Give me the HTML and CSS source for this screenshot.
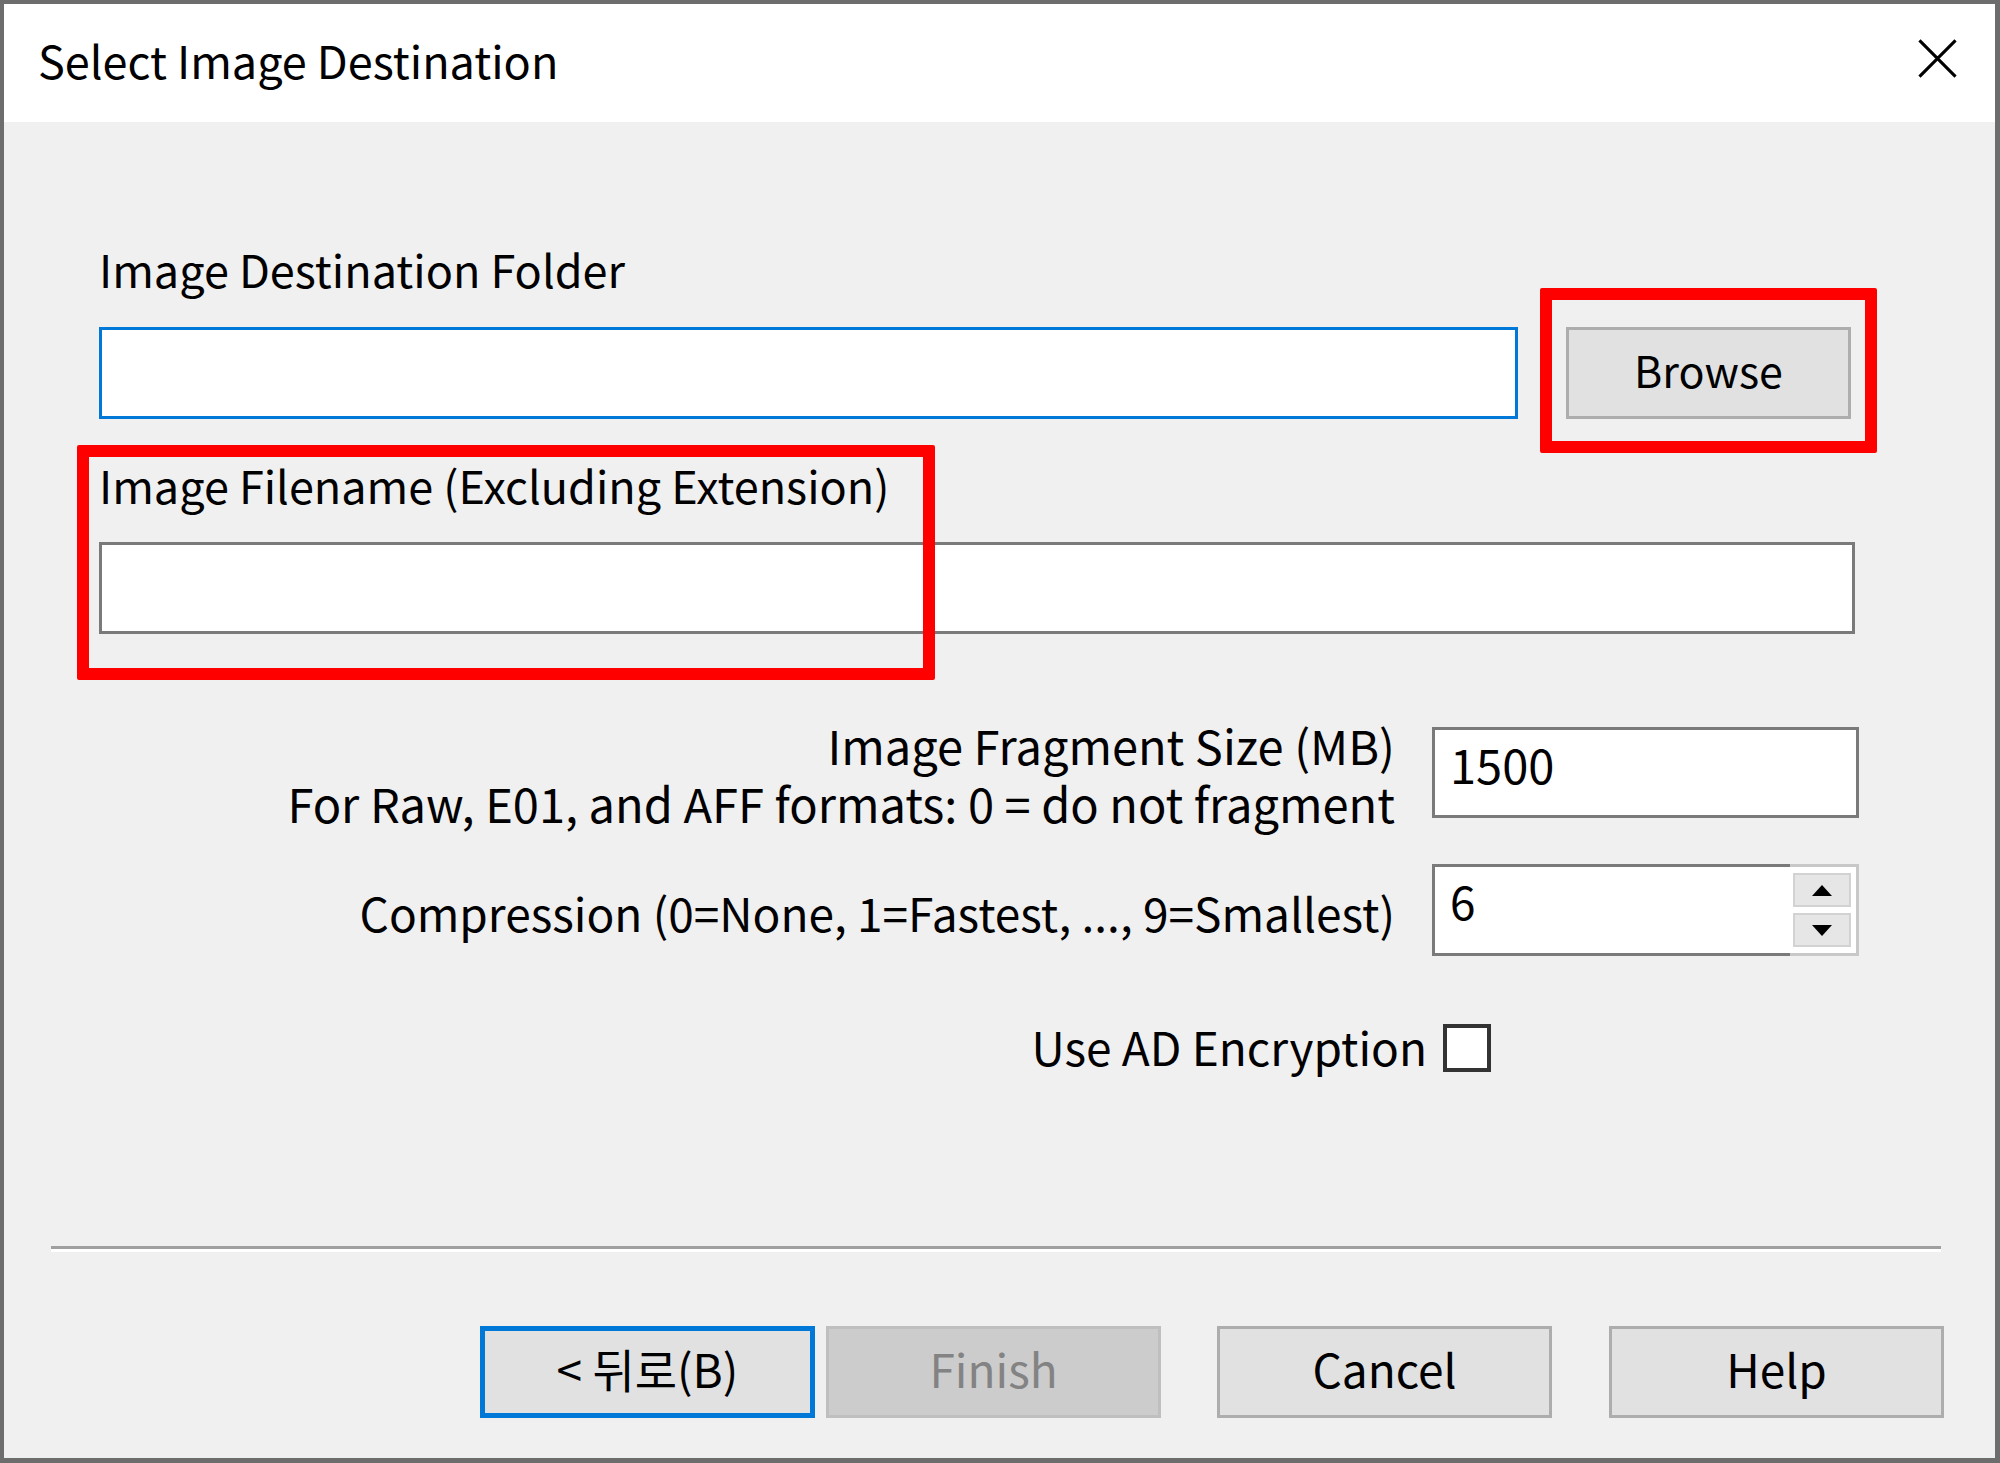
FILE: index.html
```html
<!DOCTYPE html>
<html lang="en">
<head>
<meta charset="utf-8">
<title>Select Image Destination</title>
<link rel="stylesheet" href="styles.css">
</head>
<body>
<div class="window">
  <div class="titlebar">
    <div class="title">Select Image Destination</div>
    <svg class="close" viewBox="0 0 40 40" aria-label="Close">
      <path d="M1.5 1.5 L38.5 38.5 M38.5 1.5 L1.5 38.5" stroke="#000" stroke-width="3.2" fill="none"/>
    </svg>
  </div>
  <div class="content">
    <div class="label l1">Image Destination Folder</div>
    <div class="row1">
      <div class="field field-focus"></div>
      <div class="browse-wrap">
        <div class="btn browse">Browse</div>
        <div class="mark mark-browse"></div>
      </div>
    </div>
    <div class="filename">
      <div class="label l2">Image Filename (Excluding Extension)</div>
      <div class="field field-name"></div>
      <div class="mark mark-name"></div>
    </div>
    <div class="opt-row frag">
      <div class="opt-label two">
        <div class="opt-line">Image Fragment Size (MB)</div>
        <div class="opt-line">For Raw, E01, and AFF formats: 0 = do not fragment</div>
      </div>
      <div class="field num">1500</div>
    </div>
    <div class="opt-row comp">
      <div class="opt-label comp-label">Compression (0=None, 1=Fastest, ..., 9=Smallest)</div>
      <div class="spin">
        <div class="spin-edit">6</div>
        <div class="spin-btns">
          <div class="spin-btn">
            <svg class="tri" viewBox="0 0 20 11"><polygon points="10,0 20,11 0,11" fill="#000"/></svg>
          </div>
          <div class="spin-btn">
            <svg class="tri" viewBox="0 0 20 11"><polygon points="0,0 20,0 10,11" fill="#000"/></svg>
          </div>
        </div>
      </div>
    </div>
    <div class="check-row">
      <span class="check-label">Use AD Encryption</span>
      <span class="checkbox"></span>
    </div>
  </div>
  <div class="separator"></div>
  <div class="buttons">
    <div class="btn btn-bottom btn-back">&lt; 뒤로(B)</div>
    <div class="btn btn-bottom btn-disabled">Finish</div>
    <div class="btn btn-bottom btn-cancel">Cancel</div>
    <div class="btn btn-bottom btn-help">Help</div>
  </div>
</div>
</body>
</html>
```
FILE: styles.css
```css
html, body {
  margin: 0;
  padding: 0;
  background: #f0f0f0;
}

body {
  font-family: "Noto Sans CJK KR", "Noto Sans", sans-serif;
  color: #000;
}

.window {
  width: 2000px;
  height: 1463px;
  box-sizing: border-box;
  border: 4px solid #6d6d6d;
  border-bottom-width: 5px;
  border-right-width: 5px;
  background: #f0f0f0;
  display: flex;
  flex-direction: column;
  overflow: hidden;
}

/* title bar */
.titlebar {
  height: 118px;
  flex: none;
  background: #ffffff;
  display: flex;
  align-items: flex-start;
  justify-content: space-between;
  padding: 0 38px 0 34px;
}

.title {
  margin-top: 26px;
  font-size: 45px;
  line-height: 60px;
  white-space: nowrap;
}

.close {
  width: 39px;
  height: 39px;
  margin-top: 35px;
}

/* content */
.content {
  padding: 119px 140px 0 95px;
}

.label {
  font-size: 45px;
  line-height: 56px;
  white-space: nowrap;
}

.row1 {
  display: flex;
  gap: 48px;
  margin-top: 30px;
}

.field {
  box-sizing: border-box;
  height: 92px;
  background: #ffffff;
  border: 3px solid #7a7a7a;
}

.field-focus {
  width: 1419px;
  border-color: #0078d7;
}

.browse-wrap {
  position: relative;
  width: 285px;
}

.btn {
  box-sizing: border-box;
  height: 92px;
  background: #e1e1e1;
  border: 3px solid #adadad;
  text-align: center;
  white-space: nowrap;
}

.browse {
  font-size: 43px;
  line-height: 79px;
  padding-bottom: 7px;
}

/* red annotation rectangles */
.mark {
  position: absolute;
  box-sizing: border-box;
  border: 12px solid #ff0000;
  border-radius: 2px;
  pointer-events: none;
}

.mark-browse {
  left: -26px;
  top: -39px;
  width: 337px;
  height: 165px;
}

.filename {
  position: relative;
  margin-top: 38px;
}

.field-name {
  margin-top: 29px;
}

.mark-name {
  left: -22px;
  top: -12px;
  width: 858px;
  height: 235px;
}

/* option rows */
.opt-row {
  display: flex;
  justify-content: flex-end;
  align-items: flex-start;
  gap: 37px;
  margin-right: -4px;
}

.frag {
  margin-top: 82px;
}

.opt-label {
  text-align: right;
  font-size: 47px;
  line-height: 58px;
  white-space: nowrap;
}

.opt-line {
  height: 58px;
}

.num {
  width: 427px;
  height: 91px;
  margin-top: 11px;
  font-size: 47px;
  line-height: 60px;
  padding: 4px 0 0 15px;
}

.comp {
  margin-top: 32px;
}

.comp-label {
  font-size: 46px;
  line-height: 92px;
  padding-top: 2px;
}

.spin {
  width: 427px;
  height: 92px;
  display: flex;
}

.spin-edit {
  flex: 1;
  box-sizing: border-box;
  height: 92px;
  background: #ffffff;
  border: 3px solid #7a7a7a;
  border-right: none;
  font-size: 46px;
  line-height: 60px;
  padding: 3px 0 0 15px;
}

.spin-btns {
  width: 69px;
  box-sizing: border-box;
  height: 92px;
  background: #ffffff;
  border: 3px solid #c8c8c8;
  border-left: none;
  padding: 6px 5px 6px 3px;
  display: flex;
  flex-direction: column;
  gap: 6px;
}

.spin-btn {
  flex: 1;
  background: #e6e6e6;
  border: 2px solid #d2d2d2;
  display: flex;
  align-items: center;
  justify-content: center;
}

.tri {
  width: 20px;
  height: 11px;
}

.check-row {
  display: flex;
  justify-content: flex-end;
  align-items: center;
  gap: 16px;
  margin-top: 66px;
  margin-right: 364px;
}

.check-label {
  font-size: 46px;
  line-height: 48px;
  white-space: nowrap;
  position: relative;
  top: -2px;
}

.checkbox {
  width: 48px;
  height: 48px;
  box-sizing: border-box;
  border: 4px solid #333333;
  background: #ffffff;
}

/* footer */
.separator {
  height: 3px;
  flex: none;
  background: #a0a0a0;
  border-bottom: 3px solid #ffffff;
  margin: 174px 54px 0 47px;
}

.buttons {
  display: flex;
  justify-content: flex-end;
  margin-top: 74px;
  padding-right: 51px;
}

.btn-bottom {
  width: 335px;
  font-size: 46px;
  line-height: 78px;
  padding-bottom: 8px;
}

.btn-back {
  border: 5px solid #0078d7;
  line-height: 74px;
}

.btn-disabled {
  margin-left: 11px;
  background: #cccccc;
  border-color: #bfbfbf;
  color: #838383;
}

.btn-cancel {
  margin-left: 56px;
}

.btn-help {
  margin-left: 57px;
}
```
